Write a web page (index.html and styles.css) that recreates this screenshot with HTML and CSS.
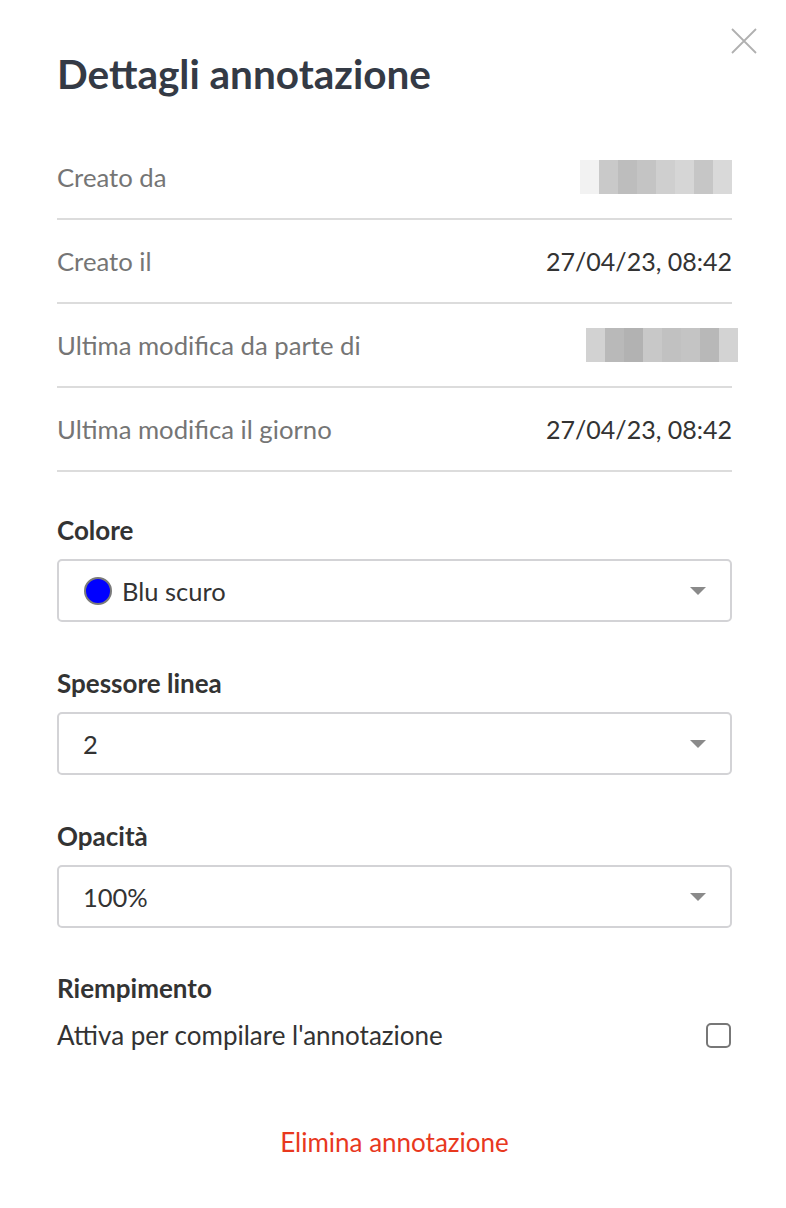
FILE: index.html
```html
<!DOCTYPE html>
<html lang="it">
<head>
<meta charset="utf-8">
<link rel="stylesheet" href="styles.css">
</head>
<body>
<div class="panel">
  <button class="close" aria-label="Chiudi">
    <svg width="26" height="26" viewBox="0 0 26 26"><path d="M1 1L25 25M25 1L1 25" stroke="#b0b0b0" stroke-width="1.8" fill="none"/></svg>
  </button>
  <h1 class="title">Dettagli annotazione</h1>
  <div class="rows">
    <div class="row">
      <span class="label">Creato da</span>
      <span class="blur b1">
        <i style="background:#f2f2f2"></i><i style="background:#c9c9c9"></i><i style="background:#bdbdbd"></i><i style="background:#c4c4c4"></i><i style="background:#cfcfcf"></i><i style="background:#d6d6d6"></i><i style="background:#c6c6c6"></i><i style="background:#d9d9d9"></i>
      </span>
    </div>
    <div class="row">
      <span class="label">Creato il</span>
      <span class="value">27/04/23, 08:42</span>
    </div>
    <div class="row">
      <span class="label">Ultima modifica da parte di</span>
      <span class="blur b2">
        <i style="background:#d2d2d2"></i><i style="background:#b9b9b9"></i><i style="background:#b2b2b2"></i><i style="background:#c8c8c8"></i><i style="background:#c1c1c1"></i><i style="background:#c4c4c4"></i><i style="background:#b8b8b8"></i><i style="background:#d3d3d3"></i>
      </span>
    </div>
    <div class="row">
      <span class="label">Ultima modifica il giorno</span>
      <span class="value">27/04/23, 08:42</span>
    </div>
  </div>

  <div class="field">
    <div class="field-label">Colore</div>
    <div class="select">
      <span class="dot"></span>
      <span class="select-text">Blu scuro</span>
      <span class="caret"></span>
    </div>
  </div>
  <div class="field">
    <div class="field-label">Spessore linea</div>
    <div class="select">
      <span class="select-text">2</span>
      <span class="caret"></span>
    </div>
  </div>
  <div class="field">
    <div class="field-label">Opacità</div>
    <div class="select">
      <span class="select-text">100%</span>
      <span class="caret"></span>
    </div>
  </div>

  <div class="fill">
    <div class="field-label">Riempimento</div>
    <div class="fill-row">
      <span class="fill-text">Attiva per compilare l'annotazione</span>
      <span class="checkbox"></span>
    </div>
  </div>

  <div class="delete-wrap">
    <button class="delete">Elimina annotazione</button>
  </div>
</div>
</body>
</html>
```

FILE: styles.css
```css
* { box-sizing: border-box; }
html, body { margin: 0; padding: 0; background: #fff; }
body { font-family: Lato, "Noto Sans", sans-serif; color: #333; }

.panel {
  position: relative;
  width: 786px;
  padding: 50px 54px 0 57px;
}
.close {
  position: absolute;
  top: 28px;
  right: 29px;
  width: 26px;
  height: 26px;
  padding: 0;
  border: 0;
  background: none;
}
.close svg { display: block; }

.title {
  margin: 0;
  font-size: 40.5px;
  font-weight: 700;
  line-height: 48px;
  color: #343a45;
}

.rows { margin-top: 38px; }
.row {
  display: flex;
  justify-content: space-between;
  align-items: center;
  height: 84px;
  border-bottom: 2px solid #dcdcdc;
}
.label { font-size: 25.7px; line-height: 30px; color: #757575; }
.value { font-size: 25px; line-height: 30px; color: #333; }

.blur { display: flex; height: 34px; }
.blur i { display: block; width: 19px; height: 34px; }
.b2 { margin-right: -6px; }

.field { margin-top: 43px; }
.field + .field { margin-top: 46px; }
.field-label {
  font-size: 26px;
  font-weight: 700;
  color: #333;
  line-height: 30px;
}
.select {
  margin-top: 14px;
  height: 63px;
  border: 2px solid #d3d3d6;
  border-radius: 5px;
  display: flex;
  align-items: center;
  padding: 0 24px;
}
.dot {
  width: 28px;
  height: 28px;
  border-radius: 50%;
  background: #0000ff;
  border: 2px solid #7a7a7a;
  margin-left: 1px;
  margin-right: 10px;
}
.select-text { font-size: 25.5px; line-height: 30px; color: #333; flex: 1; }
.caret {
  width: 0;
  height: 0;
  border-left: 8px solid transparent;
  border-right: 8px solid transparent;
  border-top: 8px solid #8a8a8a;
}

.fill { margin-top: 45px; }
.fill-row {
  display: flex;
  justify-content: space-between;
  align-items: center;
  margin-top: 17px;
}
.fill-text { font-size: 26px; line-height: 30px; color: #333; }
.checkbox {
  width: 25px;
  height: 25px;
  border: 2px solid #777;
  border-radius: 5px;
  margin-right: 1px;
}

.delete-wrap {
  display: flex;
  justify-content: center;
  margin-top: 77px;
}
.delete {
  border: 0;
  background: none;
  padding: 0;
  font-family: Lato, "Noto Sans", sans-serif;
  font-size: 26px;
  line-height: 30px;
  color: #e8381e;
}
```
